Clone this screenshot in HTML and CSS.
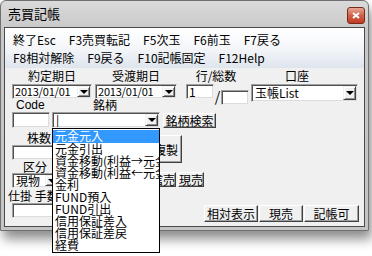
FILE: index.html
```html
<!DOCTYPE html>
<html lang="ja">
	<head>
		<meta charset="UTF-8" />
		<title>売買記帳</title>
		<link rel="stylesheet" href="styles.css">
	</head>
	<body>
		<div class="window">
			<div class="titlebar">
				<span class="title">売買記帳</span>
				<span class="close">
					<svg width="8" height="7" viewBox="0 0 8 7">
						<path d="M1 1 L7 6 M7 1 L1 6" stroke="#fff" stroke-width="2" />
					</svg>
				</span>
			</div>
			<div class="client">
				<div class="menu">
					<div class="menu-row">
						<span>終了Esc</span>
						<span>F3売買転記</span>
						<span>F5次玉</span>
						<span>F6前玉</span>
						<span>F7戻る</span>
					</div>
					<div class="menu-row">
						<span>F8相対解除</span>
						<span>F9戻る</span>
						<span>F10記帳固定</span>
						<span>F12Help</span>
					</div>
				</div>

				<div class="form">
					<div class="row row-labels">
						<span class="lbl lbl-yakujo">約定期日</span>
						<span class="lbl lbl-ukewatashi">受渡期日</span>
						<span class="lbl lbl-gyo">行/総数</span>
						<span class="lbl lbl-koza">口座</span>
					</div>
					<div class="row row-dates">
						<div class="combo combo-date1"><span class="combo-text date">2013/01/01</span><span class="drop"></span></div>
						<div class="combo combo-date2"><span class="combo-text date">2013/01/01</span><span class="drop"></span></div>
						<div class="field field-gyo">1</div>
						<span class="slash">/</span>
						<div class="field field-total"></div>
						<div class="combo combo-koza"><span class="combo-text">玉帳List</span><span class="drop"></span></div>
					</div>
					<div class="row row-labels2">
						<span class="lbl lbl-code">Code</span>
						<span class="lbl">銘柄</span>
					</div>
					<div class="row row-meigara">
						<div class="field field-code"></div>
						<div class="combo combo-meigara"><span class="combo-text">|</span><span class="drop"></span></div>
						<div class="btn btn-search">銘柄検索</div>
					</div>

					<div class="lower">
						<div class="col-left">
							<span class="lbl lbl-kabu">株数</span>
							<div class="field field-left"></div>
							<span class="lbl lbl-kubun">区分</span>
							<div class="combo combo-kubun"><span class="combo-text">現物</span><span class="drop"></span></div>
							<span class="lbl lbl-shikake">仕掛 手数料</span>
							<div class="field field-left"></div>
						</div>
						<div class="col-mid">
							<div class="stub stub-top"></div>
							<div class="stub stub-panel"></div>
						</div>
						<div class="col-right">
							<div class="btn btn-copy">複製</div>
							<div class="btn-pair">
								<div class="btn btn-small">信売</div>
								<div class="btn btn-small">現売</div>
							</div>
						</div>
						<div class="col-bar">
							<div class="btn btn-soutai">相対表示</div>
							<div class="btn btn-genbai">現売</div>
							<div class="btn btn-kicho">記帳可</div>
						</div>
					</div>
				</div>
			</div>
		</div>

		<!-- open dropdown of 銘柄, drawn over the window -->
		<ul class="droplist">
			<li class="selected">元金元入</li>
			<li>元金引出</li>
			<li>資金移動(利益→元金)</li>
			<li>資金移動(利益←元金)</li>
			<li>金利</li>
			<li>FUND預入</li>
			<li>FUND引出</li>
			<li>信用保証差入</li>
			<li>信用保証差戻</li>
			<li>経費</li>
		</ul>
	</body>
</html>
```

FILE: styles.css
```css
html,
body {
	height: 100%;
}
body {
	margin: 0;
	position: relative;
	background: #ffffff;
	font-family: 'Noto Sans CJK JP', sans-serif;
	font-size: 12px;
	color: #000;
}
.window {
	width: 369px;
	height: 231px;
	box-sizing: border-box;
	padding: 0 3px 3px 3px;
	border: 1px solid #707070;
	border-radius: 6px 6px 0 0;
	background: linear-gradient(#dadada, #c8c8c8 30px, #c4c4c4);
	box-shadow: 3px 8px 12px rgba(0, 0, 0, 0.45);
	display: flex;
	flex-direction: column;
}
.titlebar {
	height: 26px;
	display: flex;
	justify-content: space-between;
	align-items: center;
	padding-left: 4px;
}
.title {
	font-size: 13px;
	line-height: 16px;
}
.close {
	width: 18px;
	height: 17px;
	box-sizing: border-box;
	margin-top: 3px;
	border: 1px solid #7a2a1c;
	border-radius: 3px;
	background: linear-gradient(#e8a796, #d0604a 50%, #c13a22);
	display: flex;
	align-items: center;
	justify-content: center;
}
.client {
	flex: 1;
	border: 1px solid #4a4a4a;
	background: #f0f0f0;
	display: flex;
	flex-direction: column;
}

/* menu strip */
.menu {
	height: 40px;
	box-sizing: border-box;
	padding: 3px 0 0 8px;
	background: linear-gradient(#ffffff, #f4f6f9 50%, #dfe5ee);
}
.menu-row {
	display: flex;
	gap: 13px;
	height: 18px;
	line-height: 18px;
	white-space: nowrap;
}

/* form */
.form {
	flex: 1;
	display: flex;
	flex-direction: column;
}
.row {
	display: flex;
	align-items: flex-start;
	flex-shrink: 0;
}
.lbl {
	white-space: nowrap;
	line-height: 14px;
}
.row-labels {
	height: 14px;
	margin-top: 1px;
}
.lbl-yakujo {
	margin-left: 7px;
	width: 80px;
	text-align: center;
}
.lbl-ukewatashi {
	margin-left: 3px;
	width: 82px;
	text-align: center;
}
.lbl-gyo {
	margin-left: 9px;
	width: 60px;
	text-align: center;
}
.lbl-koza {
	width: 102px;
	text-align: center;
}
.row-dates {
	height: 14px;
	margin-top: 1px;
}
.field,
.combo {
	box-sizing: border-box;
	background: #fff;
	border: 1px solid;
	border-color: #a0a0a0 #f0f0f0 #f0f0f0 #a0a0a0;
	box-shadow: inset 1px 1px #505050, inset -1px -1px #dcdcdc;
	line-height: 13px;
	padding-left: 2px;
	white-space: nowrap;
	overflow: hidden;
}
.combo {
	display: flex;
	align-items: stretch;
	padding: 1px;
}
.combo-text {
	flex: 1;
	min-width: 0;
	align-self: center;
	padding-left: 2px;
	line-height: 12px;
}
.combo-text.date {
	padding-left: 1px;
	font-size: 11px;
	line-height: 11px;
	letter-spacing: -0.2px;
}
.drop {
	width: 13px;
	flex-shrink: 0;
	box-sizing: border-box;
	background: #f0f0f0;
	border: 1px solid;
	border-color: #f0f0f0 #404040 #404040 #f0f0f0;
	box-shadow: inset 1px 1px #fff, inset -1px -1px #909090;
	display: flex;
	align-items: center;
	justify-content: center;
}
.drop::after {
	content: '';
	border-left: 4px solid transparent;
	border-right: 4px solid transparent;
	border-top: 4px solid #000;
}
.combo-date1 {
	margin-left: 7px;
	width: 80px;
	height: 15px;
}
.combo-date2 {
	margin-left: 3px;
	width: 82px;
	height: 15px;
}
.field-gyo {
	margin-left: 9px;
	width: 28px;
	height: 15px;
}
.slash {
	width: 7px;
	font-size: 14px;
	line-height: 14px;
	margin-top: 5px;
	text-align: center;
}
.field-total {
	width: 28px;
	height: 15px;
	margin-top: 6px;
}
.combo-koza {
	margin-left: 2px;
	width: 107px;
	height: 18px;
}
.combo-koza .combo-text {
	line-height: 14px;
}
.row-labels2 {
	height: 14px;
}
.lbl-code {
	font-family: 'Liberation Sans', sans-serif;
	margin-left: 11px;
	width: 77px;
}
.row-meigara {
	height: 16px;
}
.field-code {
	margin-left: 7px;
	width: 38px;
	height: 16px;
}
.combo-meigara {
	margin-left: 2px;
	width: 108px;
	height: 16px;
}
.btn {
	box-sizing: border-box;
	background: #f0f0f0;
	border: 1px solid;
	border-color: #fff #404040 #404040 #fff;
	box-shadow: inset -1px -1px #a0a0a0;
	display: flex;
	align-items: center;
	justify-content: center;
	white-space: nowrap;
	line-height: 13px;
}
.btn-search {
	margin-left: 3px;
	margin-top: 1px;
	width: 53px;
	height: 15px;
}

/* lower block */
.lower {
	flex: 1;
	display: flex;
}
.col-left {
	margin-left: 7px;
	width: 40px;
	display: flex;
	flex-direction: column;
}
.lbl-kabu {
	margin-top: 3px;
	height: 14px;
	padding-left: 15px;
}
.field-left {
	width: 60px;
	height: 15px;
	flex-shrink: 0;
}
.lbl-kubun {
	height: 13px;
	padding-left: 11px;
}
.combo-kubun {
	width: 48px;
	height: 15px;
	flex-shrink: 0;
}
.lbl-shikake {
	height: 15px;
	line-height: 15px;
	margin-left: -4px;
}
.col-mid {
	width: 113px;
	display: flex;
	flex-direction: column;
	align-items: flex-end;
}
.stub {
	box-sizing: border-box;
	width: 50px;
}
.stub-top {
	margin-top: 6px;
	height: 12px;
	background: #fff;
	border: 1px solid #606060;
	border-right: 2px solid #202020;
}
.stub-panel {
	margin-top: 1px;
	height: 43px;
	border: 1px solid #a0a0a0;
	border-right-width: 3px;
	border-right-style: double;
}
.col-right {
	width: 55px;
	display: flex;
	flex-direction: column;
}
.btn-copy {
	margin-top: 7px;
	width: 32px;
	height: 28px;
}
.btn-pair {
	display: flex;
	gap: 2px;
	margin-top: 9px;
}
.btn-small {
	width: 26px;
	height: 15px;
}
.col-bar {
	flex: 1;
	align-self: flex-end;
	display: flex;
	justify-content: flex-end;
	gap: 1px;
	padding-right: 5px;
	margin-bottom: 4px;
}
.col-bar .btn {
	height: 17px;
}
.btn-soutai {
	width: 54px;
}
.btn-genbai {
	width: 44px;
}
.btn-kicho {
	width: 55px;
}

/* open dropdown list */
.droplist {
	position: absolute;
	left: 52px;
	top: 128px;
	width: 108px;
	box-sizing: border-box;
	margin: 0;
	padding: 1px 0;
	list-style: none;
	background: #fff;
	border: 1px solid #000;
	overflow: hidden;
	z-index: 10;
}
.droplist li {
	height: 12px;
	line-height: 12px;
	padding-left: 2px;
	white-space: nowrap;
}
.droplist li.selected {
	height: 13px;
	background: #3399ff;
	color: #fff;
}
```
